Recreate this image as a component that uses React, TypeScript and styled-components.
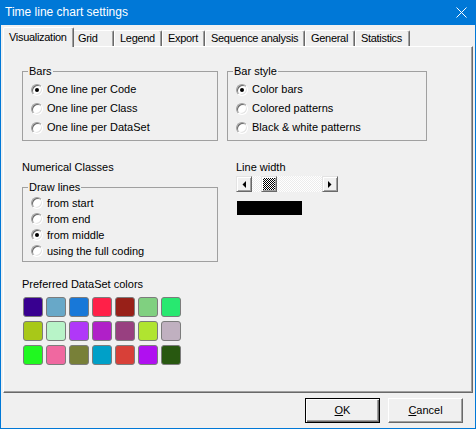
import styled, { createGlobalStyle } from "styled-components";

const GlobalStyle = createGlobalStyle`
  html, body {
    margin: 0;
    padding: 0;
    background: #f0f0f0;
  }
  body {
    font-family: "Liberation Sans", Arial, sans-serif;
    font-size: 11px;
    line-height: 13px;
    color: #000;
  }
`;

const tabs = [
  { label: "Visualization", width: 71 },
  { label: "Grid", width: 42 },
  { label: "Legend", width: 48 },
  { label: "Export", width: 43 },
  { label: "Sequence analysis", width: 100 },
  { label: "General", width: 50 },
  { label: "Statistics", width: 55 },
];

const swatches = [
  "#380090", "#68a8c8", "#1878d8", "#ff2048", "#982018", "#80d080", "#28e870",
  "#a8c818", "#b8f4c8", "#b038f8", "#b020c8", "#984080", "#b0e430", "#c0b0c0",
  "#20f820", "#f068a0", "#788038", "#00a0c8", "#d84038", "#b010f0", "#285810",
];

const Radio = ({ label, $h, $checked }: { label: string; $h: number; $checked?: boolean }) => (
  <RadioRow $h={$h}>
    <RadioCircle $checked={$checked} />
    <span>{label}</span>
  </RadioRow>
);

const App = (): JSX.Element => {
  return (
    <>
      <GlobalStyle />
      <Window>
        <TitleBar>
          <span>Time line chart settings</span>
          <svg width="11" height="11" viewBox="0 0 11 11">
            <path d="M0.5 0.5 L10.5 10.5 M10.5 0.5 L0.5 10.5" stroke="#fff" strokeWidth="1" />
          </svg>
        </TitleBar>
        <Body>
          <TabRow>
            {tabs.map((t, i) => (
              <Tab key={t.label} $w={t.width} $active={i === 0}>
                {t.label}
              </Tab>
            ))}
          </TabRow>
          <Panel>
            <Columns>
              <GroupBox>
                <Legend>Bars</Legend>
                <Radio $h={19} $checked label="One line per Code" />
                <Radio $h={19} label="One line per Class" />
                <Radio $h={19} label="One line per DataSet" />
              </GroupBox>
              <GroupBox>
                <Legend>Bar style</Legend>
                <Radio $h={19} $checked label="Color bars" />
                <Radio $h={19} label="Colored patterns" />
                <Radio $h={19} label={"Black & white patterns"} />
              </GroupBox>

              <Column>
                <Caption>Numerical Classes</Caption>
                <DrawLines>
                  <Legend>Draw lines</Legend>
                  <Radio $h={16} label="from start" />
                  <Radio $h={16} label="from end" />
                  <Radio $h={16} $checked label="from middle" />
                  <Radio $h={16} label="using the full coding" />
                </DrawLines>
              </Column>
              <LineWidth>
                <Caption>Line width</Caption>
                <ScrollBar>
                  <ArrowButton>
                    <svg width="4" height="7" viewBox="0 0 4 7">
                      <polygon points="4,0 4,7 0.5,3.5" fill="#000" />
                    </svg>
                  </ArrowButton>
                  <Track>
                    <Thumb $offset={9} />
                  </Track>
                  <ArrowButton>
                    <svg width="4" height="7" viewBox="0 0 4 7">
                      <polygon points="0,0 0,7 3.5,3.5" fill="#000" />
                    </svg>
                  </ArrowButton>
                </ScrollBar>
                <LineSample />
              </LineWidth>
            </Columns>

            <Colors>
              <Caption>Preferred DataSet colors</Caption>
              <SwatchGrid>
                {swatches.map((c, i) => (
                  <Swatch key={i} $color={c} />
                ))}
              </SwatchGrid>
            </Colors>
          </Panel>
        </Body>
        <Footer>
          <Button $default>
            <u>O</u>K
          </Button>
          <Button>
            <u>C</u>ancel
          </Button>
        </Footer>
      </Window>
    </>
  );
};

export default App;

const Window = styled.div`
  width: 476px;
  height: 429px;
  box-sizing: border-box;
  border: 1px solid #0078d7;
  border-top: none;
  background: #f0f0f0;
  display: flex;
  flex-direction: column;
`;

const TitleBar = styled.div`
  height: 25px;
  flex: none;
  background: #0078d7;
  color: #fff;
  display: flex;
  align-items: center;
  justify-content: space-between;
  padding: 0 8px 0 4px;
  font-family: "Liberation Sans", Arial, sans-serif;
  font-size: 12px;

  svg {
    display: block;
  }
`;

const Body = styled.div`
  padding: 2px 0 0 2px;
  display: flex;
  flex-direction: column;
`;

const TabRow = styled.div`
  display: flex;
  align-items: flex-end;
  height: 19px;
  position: relative;
  z-index: 1;
`;

const Tab = styled.div<{ $w: number; $active?: boolean }>`
  width: ${(p) => p.$w}px;
  height: ${(p) => (p.$active ? 20 : 16)}px;
  margin-bottom: ${(p) => (p.$active ? -1 : 0)}px;
  margin-right: ${(p) => (p.$active ? -2 : 0)}px;
  position: relative;
  z-index: ${(p) => (p.$active ? 2 : 1)};
  box-sizing: border-box;
  border: 1px solid #fff;
  border-right-color: #696969;
  border-bottom: none;
  border-radius: 2px 2px 0 0;
  box-shadow: inset -1px 0 0 #a0a0a0;
  background: #f0f0f0;
  padding-left: 5px;
  padding-bottom: ${(p) => (p.$active ? 1 : 0)}px;
  display: flex;
  align-items: center;
  white-space: nowrap;
  overflow: hidden;
  letter-spacing: -0.3px;
`;

const Panel = styled.div`
  width: 470px;
  height: 347px;
  box-sizing: border-box;
  border: 1px solid;
  border-color: #fff #696969 #696969 #fff;
  box-shadow: inset -1px -1px 0 #a0a0a0;
  padding: 18px 0 0 18px;
`;

const Columns = styled.div`
  display: grid;
  grid-template-columns: 196px 200px;
  column-gap: 9px;
  row-gap: 20px;
  align-items: start;
`;

const GroupBox = styled.fieldset`
  margin: 0;
  min-width: 0;
  box-sizing: border-box;
  border: 1px solid #a0a0a0;
  padding: 2px 6px 3px 8px;
`;

const DrawLines = styled(GroupBox)`
  margin-top: 7px;
  padding-top: 1px;
  padding-bottom: 2px;
`;

const Legend = styled.legend`
  padding: 0 1px;
  margin-left: -3px;
  line-height: 13px;
`;

const RadioRow = styled.label<{ $h: number }>`
  display: flex;
  align-items: center;
  gap: 4px;
  height: ${(p) => p.$h}px;
  white-space: nowrap;
`;

const RadioCircle = styled.span<{ $checked?: boolean }>`
  width: 12px;
  height: 12px;
  flex: none;
  box-sizing: border-box;
  border-radius: 50%;
  border: 1px solid;
  border-color: #a0a0a0 #fff #fff #a0a0a0;
  box-shadow: inset 1px 1px 0 #696969, inset -1px -1px 0 #e3e3e3;
  background: #fff;
  display: flex;
  align-items: center;
  justify-content: center;

  &::after {
    content: "";
    width: 4px;
    height: 4px;
    border-radius: 50%;
    background: #000;
    display: ${(p) => (p.$checked ? "block" : "none")};
  }
`;

const Column = styled.div`
  display: flex;
  flex-direction: column;
`;

const Caption = styled.div`
  line-height: 13px;
  white-space: nowrap;
`;

const LineWidth = styled.div`
  display: flex;
  flex-direction: column;
  padding-left: 9px;
`;

const ScrollBar = styled.div`
  margin-top: 2px;
  width: 102px;
  height: 16px;
  display: flex;
`;

const raised = `
  box-sizing: border-box;
  border: 1px solid;
  border-color: #e3e3e3 #696969 #696969 #e3e3e3;
  box-shadow: inset 1px 1px 0 #fff, inset -1px -1px 0 #a0a0a0;
  background: #f0f0f0;
`;

const ArrowButton = styled.div`
  ${raised}
  width: 16px;
  height: 16px;
  flex: none;
  display: flex;
  align-items: center;
  justify-content: center;

  svg {
    display: block;
  }
`;

const Track = styled.div`
  flex: 1;
  height: 16px;
  background: repeating-conic-gradient(#fff 0 25%, #ececec 0 50%) 0 0 / 2px 2px;
`;

const Thumb = styled.div<{ $offset: number }>`
  ${raised}
  margin-left: ${(p) => p.$offset}px;
  width: 16px;
  height: 16px;
  background: repeating-conic-gradient(#000 0 25%, #fff 0 50%) 0 0 / 2px 2px;
  background-clip: content-box;
  padding: 1px;
`;

const LineSample = styled.div`
  margin: 9px 0 0 1px;
  width: 65px;
  height: 14px;
  background: #000;
`;

const Colors = styled.div`
  margin-top: 16px;
`;

const SwatchGrid = styled.div`
  margin: 6px 0 0 1px;
  display: grid;
  grid-template-columns: repeat(7, 20px);
  grid-auto-rows: 20px;
  column-gap: 3px;
  row-gap: 4px;
`;

const Swatch = styled.div<{ $color: string }>`
  box-sizing: border-box;
  border: 1px solid #7c7c7c;
  border-radius: 3px;
  background: ${(p) => p.$color};
`;

const Footer = styled.div`
  display: flex;
  justify-content: flex-end;
  gap: 8px;
  padding: 5px 12px 0 0;
`;

const Button = styled.div<{ $default?: boolean }>`
  width: 75px;
  height: 25px;
  box-sizing: border-box;
  display: flex;
  align-items: center;
  justify-content: center;
  background: #f0f0f0;
  border: 1px solid;
  border-color: ${(p) => (p.$default ? "#000" : "#fff #696969 #696969 #fff")};
  box-shadow: ${(p) =>
    p.$default
      ? "inset 1px 1px 0 #fff, inset -1px -1px 0 #696969, inset -2px -2px 0 #a0a0a0"
      : "inset -1px -1px 0 #a0a0a0"};
`;
